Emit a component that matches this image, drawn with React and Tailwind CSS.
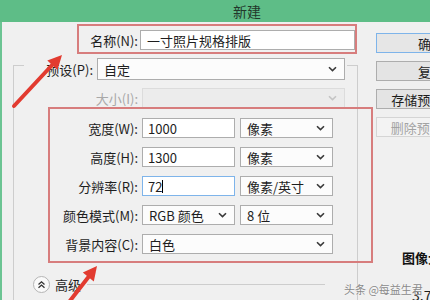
import React from "react";

function Chevron({ light }) {
  return (
    <svg width="9" height="6" viewBox="0 0 9 6" className="shrink-0">
      <path d="M1 1.2 L4.5 4.6 L8 1.2" fill="none" stroke={light ? "#c4c4c4" : "#3a3a3a"} strokeWidth="1.6" />
    </svg>
  );
}

function Select({ value, className = "", disabled }) {
  return (
    <div
      className={
        "h-[20px] flex items-center justify-between pl-[6px] pr-[7px] border " +
        (disabled ? "bg-[#ececec] border-[#dcdcdc]" : "bg-[#fcfcfc] border-[#adadad]") +
        " " +
        className
      }
    >
      <span>{value}</span>
      <Chevron light={disabled} />
    </div>
  );
}

function Field({ label, value, focused }) {
  return (
    <div className="h-[20px] flex items-center">
      <span className="w-[124px] text-right">{label}</span>
      <div
        className={
          "ml-[4px] w-[93px] h-[20px] bg-white border flex items-center px-[5px] " +
          (focused ? "border-[#7eb4ea]" : "border-[#adadad]")
        }
      >
        {value}
        {focused && <span className="w-px h-[13px] bg-black"></span>}
      </div>
    </div>
  );
}

function Button({ children, primary, disabled }) {
  return (
    <div
      className={
        "w-[110px] h-[20px] shrink-0 flex items-center justify-center border " +
        (primary
          ? "border-[#7eb4ea] bg-[#e6e6e6]"
          : disabled
          ? "border-[#d5d5d5] bg-[#f3f3f3] text-[#a3a3a3]"
          : "border-[#adadad] bg-[#e4e4e4]")
      }
    >
      {children}
    </div>
  );
}

export default function App() {
  return (
    <div className="w-[430px] h-[300px] overflow-hidden relative bg-[#f0f0f0] font-['Noto_Sans_CJK_SC','Noto_Sans',sans-serif] text-[13px] leading-none text-[#1e1e1e]">
      <div className="h-[22px] bg-[#5ebd87] flex items-center justify-center pl-[64px] text-[14px] text-[#23382b]">
        新建
      </div>

      <div className="flex h-[278px] border-l-2 border-[#6cc493]">
        {/* left: form */}
        <div className="w-[374px] shrink-0">
          <div className="mt-[8px] h-[20px] flex items-center">
            <span className="w-[136px] text-right">名称(N):</span>
            <div className="ml-[2px] w-[215px] h-[20px] bg-white border border-[#adadad] flex items-center px-[6px]">
              一寸照片规格排版
            </div>
          </div>

          <div className="mt-[15px] ml-[11px] w-[345px] h-[240px] border-l border-t border-r border-[#cdcdcd]">
            <div className="-mt-[8px] ml-[10px] w-[323px] h-[22px] bg-[#f0f0f0] flex items-center">
              <span className="w-[69px] text-right">预设(P):</span>
              <Select value="自定" className="ml-[4px] w-[248px] h-[22px]" />
            </div>

            <div className="mt-[8px] h-[20px] flex items-center text-[#a8a8a8]">
              <span className="w-[124px] text-right">大小(I):</span>
              <Select value="" disabled className="ml-[4px] w-[203px]" />
            </div>

            <div className="mt-[10px] flex flex-col gap-[9px]">
              <div className="flex items-center">
                <Field label="宽度(W):" value="1000" />
                <Select value="像素" className="ml-[5px] w-[93px]" />
              </div>
              <div className="flex items-center">
                <Field label="高度(H):" value="1300" />
                <Select value="像素" className="ml-[5px] w-[93px]" />
              </div>
              <div className="flex items-center">
                <Field label="分辨率(R):" value="72" focused />
                <Select value="像素/英寸" className="ml-[5px] w-[93px]" />
              </div>
              <div className="h-[20px] flex items-center">
                <span className="w-[124px] text-right">颜色模式(M):</span>
                <Select value="RGB 颜色" className="ml-[4px] w-[93px]" />
                <Select value="8 位" className="ml-[5px] w-[93px]" />
              </div>
              <div className="h-[20px] flex items-center">
                <span className="w-[124px] text-right">背景内容(C):</span>
                <Select value="白色" className="ml-[4px] w-[191px]" />
              </div>
            </div>

            <div className="mt-[22px] ml-[19px] mr-[32px] h-[17px] flex items-center">
              <div className="w-[17px] h-[17px] rounded-full border border-[#b5b5b5] bg-[#fafafa] flex items-center justify-center">
                <svg width="9" height="9" viewBox="0 0 9 9">
                  <path d="M1.5 4.5 L4.5 1.8 L7.5 4.5 M1.5 7.8 L4.5 5.1 L7.5 7.8" fill="none" stroke="#333" strokeWidth="1.3" />
                </svg>
              </div>
              <span className="ml-[5px]">高级</span>
              <div className="ml-[6px] flex-1 border-t border-[#cdcdcd]"></div>
            </div>
          </div>
        </div>

        {/* right: buttons */}
        <div className="flex-1 flex flex-col pt-[11px]">
          <div className="flex flex-col gap-[8px]">
            <Button primary>确定</Button>
            <Button>复位</Button>
            <Button>存储预设(S)...</Button>
            <Button disabled>删除预设(D)...</Button>
          </div>
          <div className="mt-[114px] pl-[26px] font-bold text-[#111]">图像大小:</div>
          <div className="mt-[24px] pl-[36px] text-[14px]">3.72M</div>
        </div>
      </div>

      {/* annotations */}
      <div className="absolute left-[77px] top-[24px] w-[280px] h-[30px] border-2 border-[#d77d7d]"></div>
      <div className="absolute left-[48px] top-[107px] w-[325px] h-[156px] border-2 border-[#d77d7d]"></div>
      <svg className="absolute inset-0 pointer-events-none" width="430" height="300" viewBox="0 0 430 300">
        <line x1="14" y1="106" x2="54" y2="63" stroke="#e23b30" strokeWidth="4" strokeLinecap="round" />
        <polygon points="62,55 57.5,70 47.3,60.4" fill="#e23b30" />
        <line x1="66" y1="306" x2="90" y2="275" stroke="#e23b30" strokeWidth="4" strokeLinecap="round" />
        <polygon points="97,266 93.8,281.4 82.8,272.6" fill="#e23b30" />
      </svg>
      <div className="absolute left-[344px] top-[284px] text-[11px] text-[#8a8a8a] [text-shadow:0_0_2px_#fff]">
        头条 @每益生君
      </div>
    </div>
  );
}
